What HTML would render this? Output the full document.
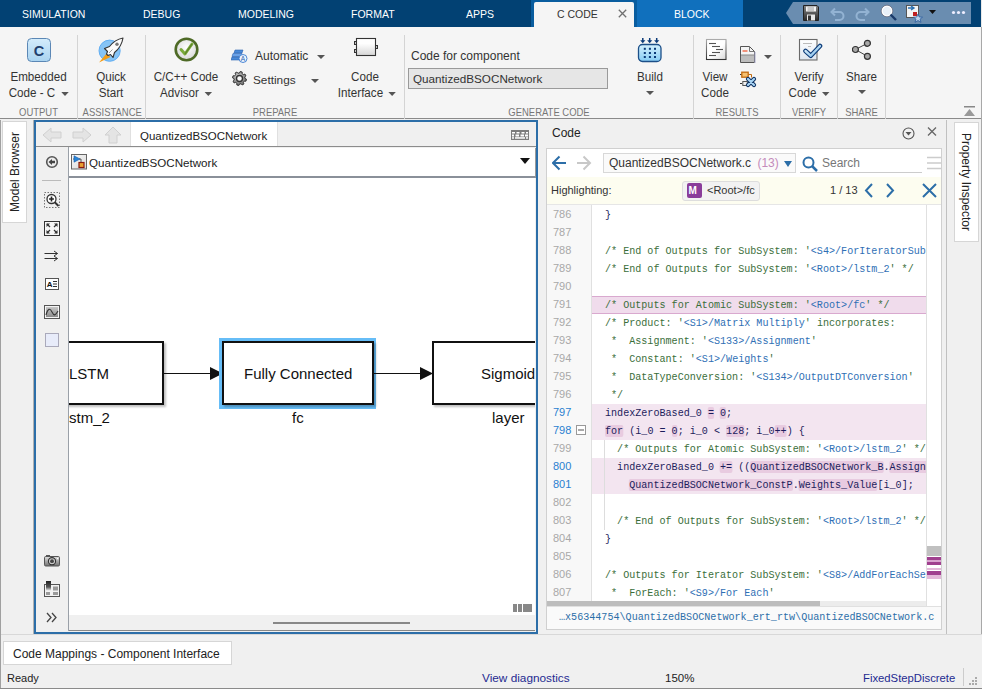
<!DOCTYPE html>
<html><head><meta charset="utf-8">
<style>
*{margin:0;padding:0;box-sizing:border-box}
html,body{width:982px;height:689px;overflow:hidden;background:#f0f0f0;font-family:"Liberation Sans",sans-serif;color:#222}
.a{position:absolute}
.t{position:absolute;white-space:nowrap;line-height:1}
#top{left:0;top:0;width:982px;height:27px;background:#024173}
.tab{position:absolute;top:9px;font-size:10.5px;color:#fff;white-space:nowrap;line-height:1}
#ribbon{left:0;top:27px;width:982px;height:92px;background:#f5f5f5;border-bottom:1px solid #8a8a8a}
.rl{position:absolute;font-size:12.5px;transform:scaleX(0.93);color:#333;white-space:nowrap;line-height:16px;text-align:center}
.sec{position:absolute;top:80px;font-size:11px;color:#777;transform:scaleX(0.86);white-space:nowrap;line-height:1}
.sep{position:absolute;top:8px;width:1px;height:84px;background:#d4d4d4}
.arr{display:inline-block;width:0;height:0;border-left:4px solid transparent;border-right:4px solid transparent;border-top:4px solid #555;vertical-align:middle;margin-left:6px}
.code{position:absolute;font-family:"Liberation Mono",monospace;font-size:11px;line-height:10px;transform:scaleX(0.917);transform-origin:0 0;color:#1c1c5c;white-space:pre}
.cm{color:#3a6e3a}.st{color:#2f6fb5}.hl{background:#e8cbe0;border-radius:2px}
.ln{position:absolute;left:6px;font-size:11px;line-height:10px;margin-top:-1px}
</style></head><body>
<div id="top" class="a">
 <div class="tab" style="left:22px">SIMULATION</div>
 <div class="tab" style="left:143px">DEBUG</div>
 <div class="tab" style="left:238px">MODELING</div>
 <div class="tab" style="left:351px">FORMAT</div>
 <div class="tab" style="left:466px">APPS</div>
 <div class="a" style="left:531px;top:0;width:106px;height:27px;background:#095d9f"></div>
 <div class="a" style="left:534px;top:2px;width:100px;height:25px;background:#f5f5f5;border-radius:2px 2px 0 0"></div>
 <div class="tab" style="left:557px;color:#333">C CODE</div>
 <svg class="a" style="left:618px;top:9px" width="9" height="9"><path d="M0.8,0.8 L8.2,8.2 M8.2,0.8 L0.8,8.2" stroke="#707070" stroke-width="1.3"/></svg>
 <div class="a" style="left:637px;top:0;width:106px;height:27px;background:#1070bd"></div>
 <div class="tab" style="left:674px">BLOCK</div>
 <svg class="a" style="left:786px;top:2px" width="185" height="22"><polygon points="7,0 185,0 185,22 7,22 0,11" fill="#6a8db0"/>
 <g transform="translate(17,3)"><defs><linearGradient id="gSv" x1="0" y1="0" x2="0" y2="1"><stop offset="0" stop-color="#888"/><stop offset="1" stop-color="#2a2a2a"/></linearGradient></defs><path d="M0.5,0.5 H14 L15.5,2 V15.5 H0.5Z" fill="url(#gSv)" stroke="#222"/><rect x="3" y="1.5" width="10" height="5" fill="#f4f4f4"/><line x1="4.5" y1="3" x2="11" y2="3" stroke="#999"/><line x1="4.5" y1="5" x2="11" y2="5" stroke="#999"/><rect x="4" y="9.5" width="8" height="6" fill="#e8e8e8"/><rect x="5" y="10.5" width="3" height="5" fill="#333"/></g>
 <g transform="translate(44,4)" fill="none" stroke="#93b3d3" stroke-width="2"><path d="M3,6 H9.5 A4,4 0 0 1 9.5,14 H5"/><path d="M5,2.5 L1.5,6 L5,9.5"/></g>
 <g transform="translate(69,4)" fill="none" stroke="#93b3d3" stroke-width="2"><path d="M12,6 H5.5 A4,4 0 0 0 5.5,14 H10"/><path d="M10,2.5 L13.5,6 L10,9.5"/></g>
 <g transform="translate(95,3)"><circle cx="6" cy="6" r="5" fill="#e8f0f8" stroke="#fff" stroke-width="1.6"/><circle cx="6" cy="6" r="5.8" fill="none" stroke="#556" stroke-width="0.6"/><path d="M9.5,9.5 L15,15" stroke="#1a3a6a" stroke-width="2.4"/></g>
 <g transform="translate(120,3)"><rect x="0.5" y="0.5" width="12" height="12" fill="#f4f4f4" stroke="#555"/><path d="M2,3 H7 M5,1 L8,3 L5,5" stroke="#2a6fb0" stroke-width="1.4" fill="none"/><rect x="7" y="7" width="4" height="4" fill="#c02020"/><path d="M12,9 L13.3,12 L16.5,12.2 L14,14.2 L15,17.3 L12,15.5 L9,17.3 L10,14.2 L7.5,12.2 L10.7,12Z" fill="#b8d0ea" stroke="#2a5a9a" stroke-width="0.8"/></g>
 <path d="M143,8 L150,8 L146.5,12Z" fill="#111"/>
 <g fill="#eef"><circle cx="167.5" cy="10.5" r="1.6"/><circle cx="172.5" cy="10.5" r="1.6"/><circle cx="177.5" cy="10.5" r="1.6"/></g>
</svg>
</div>

<div id="ribbon" class="a">
 <div class="sep" style="left:77px"></div>
 <div class="sep" style="left:145px"></div>
 <div class="sep" style="left:404px"></div>
 <div class="sep" style="left:693px"></div>
 <div class="sep" style="left:780px"></div>
 <div class="sep" style="left:837px"></div>
 <div class="sep" style="left:885px"></div>
 <!-- Embedded Coder icon -->
 <svg class="a" style="left:27px;top:11px" width="24" height="24"><defs><linearGradient id="gC" x1="0" y1="0" x2="0" y2="1"><stop offset="0" stop-color="#d4ecfb"/><stop offset="1" stop-color="#a9d3f0"/></linearGradient></defs><rect x="0.5" y="0.5" width="23" height="23" rx="4" fill="url(#gC)" stroke="#5b87b5"/><text x="12" y="17.5" text-anchor="middle" font-family="Liberation Sans" font-weight="bold" font-size="14.5" fill="#1f3f6e">C</text></svg>
 <div class="rl" style="left:0;width:77px;top:42px">Embedded</div>
 <div class="rl" style="left:0;width:77px;top:58px">Code - C<span class="arr"></span></div>
 <div class="sec" style="left:0;width:77px;text-align:center">OUTPUT</div>
 <!-- Quick start rocket -->
 <svg class="a" style="left:96px;top:9px" width="28" height="28"><circle cx="13.6" cy="14.7" r="10.6" fill="#86c4f6" stroke="#62aef2" stroke-width="1"/><path d="M3,26.5 L10.5,17.5 L14.5,21Z" fill="#f49d16"/><path d="M27,2 C22,3 17,6 13.5,10.5 L8.5,12.5 L11.5,15.5 L10.5,18 L12,19.5 L14.5,18.5 L17,21.5 L18.5,16.5 C23,13 26,8 27,2Z" fill="#fbfbfb" stroke="#333" stroke-width="1.1" stroke-linejoin="round"/><circle cx="21" cy="8.2" r="1.7" fill="#777"/><path d="M13,17 L16.5,13.5" stroke="#999" stroke-width="1"/></svg>
 <div class="rl" style="left:78px;width:66px;top:42px">Quick</div>
 <div class="rl" style="left:78px;width:66px;top:58px">Start</div>
 <div class="sec" style="left:78px;width:66px;text-align:center">ASSISTANCE</div>
 <!-- Advisor -->
 <svg class="a" style="left:174px;top:10px" width="25" height="25"><defs><radialGradient id="gA" cx="0.5" cy="0.4" r="0.6"><stop offset="0" stop-color="#ffffff"/><stop offset="1" stop-color="#d8d8d8"/></radialGradient></defs><circle cx="12.5" cy="12.5" r="10.8" fill="url(#gA)" stroke="#4e6a26" stroke-width="2.6"/><path d="M7,12.5 L11,17 L18,7" fill="none" stroke="#7aaa3a" stroke-width="3" stroke-linecap="round" stroke-linejoin="round"/><path d="M11,17 L18,7" fill="none" stroke="#5b7f2a" stroke-width="1.2"/></svg>
 <div class="rl" style="left:146px;width:80px;top:42px">C/C++ Code</div>
 <div class="rl" style="left:146px;width:80px;top:58px">Advisor<span class="arr"></span></div>
 <svg class="a" style="left:231px;top:22px" width="17" height="14"><path d="M4,1 H12 L11,4 H3Z" fill="#4a8ad8" stroke="#2a62b0" stroke-width="0.6"/><path d="M2,4.5 H11 L10,7.5 H1Z" fill="#6aa2e8" stroke="#2a62b0" stroke-width="0.6"/><path d="M1,8 H10 L9,11 H0Z" fill="#4a8ad8" stroke="#2a62b0" stroke-width="0.6"/><circle cx="12" cy="9.5" r="4" fill="#eef5fd" stroke="#3a7ad0" stroke-width="0.9"/><text x="12" y="12" text-anchor="middle" font-size="6.5" font-family="Liberation Sans" fill="#2a62b0">A</text></svg>
 <div class="rl" style="left:255px;top:21px;text-align:left;font-size:12px;transform:none">Automatic</div>
 <div class="a" style="left:317px;top:28px;border-left:4px solid transparent;border-right:4px solid transparent;border-top:4px solid #555"></div>
 <svg class="a" style="left:232px;top:72px;top:44px" width="15" height="15"><defs><radialGradient id="gG" cx="0.4" cy="0.35" r="0.7"><stop offset="0" stop-color="#d0d0d0"/><stop offset="1" stop-color="#6a6a6a"/></radialGradient></defs><path d="M13.00,7.50 L14.47,8.16 L13.97,10.18 L12.36,10.07 L11.39,11.39 L11.96,12.89 L10.18,13.97 L9.12,12.76 L7.50,13.00 L6.84,14.47 L4.82,13.97 L4.93,12.36 L3.61,11.39 L2.11,11.96 L1.03,10.18 L2.24,9.12 L2.00,7.50 L0.53,6.84 L1.03,4.82 L2.64,4.93 L3.61,3.61 L3.04,2.11 L4.82,1.03 L5.88,2.24 L7.50,2.00 L8.16,0.53 L10.18,1.03 L10.07,2.64 L11.39,3.61 L12.89,3.04 L13.97,4.82 L12.76,5.88Z" fill="url(#gG)" stroke="#333" stroke-width="1"/><circle cx="7.5" cy="7.5" r="3" fill="#fafafa" stroke="#333" stroke-width="1.4"/></svg>
 <div class="rl" style="left:253px;top:45px;text-align:left;font-size:11.8px;transform:none">Settings</div>
 <div class="a" style="left:311px;top:52px;border-left:4px solid transparent;border-right:4px solid transparent;border-top:4px solid #555"></div>
 <svg class="a" style="left:353px;top:10px" width="26" height="21"><defs><linearGradient id="gI" x1="0" y1="0" x2="0" y2="1"><stop offset="0.3" stop-color="#fefefe"/><stop offset="1" stop-color="#d6d6d6"/></linearGradient></defs><rect x="1.5" y="4.5" width="3" height="3" fill="#ccc" stroke="#333" stroke-width="1"/><rect x="1.5" y="12.5" width="3" height="3" fill="#ccc" stroke="#333" stroke-width="1"/><rect x="22.5" y="8.5" width="2" height="3" fill="#ccc" stroke="#333" stroke-width="1"/><rect x="3.5" y="1.5" width="19" height="17" fill="url(#gI)" stroke="#333" stroke-width="1.1"/></svg>
 <div class="rl" style="left:330px;width:70px;top:42px">Code</div>
 <div class="rl" style="left:332px;width:70px;top:58px">Interface<span class="arr"></span></div>
 <div class="sec" style="left:146px;width:258px;text-align:center">PREPARE</div>
 <!-- Generate code -->
 <div class="rl" style="left:411px;top:21px;text-align:left;font-size:12px;transform:none">Code for component</div>
 <div class="a" style="left:408px;top:41px;width:200px;height:21px;background:#e6e6e6;border:1px solid #9a9a9a"></div>
 <div class="rl" style="left:413px;top:44px;text-align:left;font-size:11.7px;color:#333;transform:none">QuantizedBSOCNetwork</div>
 <svg class="a" style="left:637px;top:10px" width="26" height="26"><defs><linearGradient id="gB" x1="0" y1="0" x2="0" y2="1"><stop offset="0" stop-color="#d4f0fd"/><stop offset="1" stop-color="#86ccf4"/></linearGradient></defs><rect x="1.5" y="7.5" width="22.5" height="17" rx="4" fill="url(#gB)" stroke="#1c4f88" stroke-width="1.3"/><g fill="#0b3a78"><rect x="6.8" y="10.8" width="2" height="2"/><rect x="6.8" y="15" width="2" height="2"/><rect x="6.8" y="19" width="2" height="2"/><rect x="11.9" y="10.8" width="2" height="2"/><rect x="11.9" y="15" width="2" height="2"/><rect x="11.9" y="19" width="2" height="2"/><rect x="17" y="10.8" width="2" height="2"/><rect x="17" y="15" width="2" height="2"/><rect x="17" y="19" width="2" height="2"/></g><g fill="#0b3a78" stroke="#0b3a78" stroke-width="1.5"><line x1="5.8" y1="1" x2="5.8" y2="4"/><path d="M3.1999999999999997,3.2 L8.4,3.2 L5.8,6.2Z" stroke="none"/><line x1="12.7" y1="1" x2="12.7" y2="4"/><path d="M10.1,3.2 L15.299999999999999,3.2 L12.7,6.2Z" stroke="none"/><line x1="19.7" y1="1" x2="19.7" y2="4"/><path d="M17.099999999999998,3.2 L22.3,3.2 L19.7,6.2Z" stroke="none"/></g></svg>
 <div class="rl" style="left:620px;width:60px;top:42px">Build</div>
 <div class="a" style="left:646px;top:64px;border-left:4px solid transparent;border-right:4px solid transparent;border-top:4px solid #555"></div>
 <div class="sec" style="left:405px;width:288px;text-align:center">GENERATE CODE</div>
 <!-- Results -->
 <svg class="a" style="left:705px;top:11px" width="22" height="23"><defs><linearGradient id="gVb" x1="0" y1="0" x2="0" y2="1"><stop offset="0" stop-color="#aaa"/><stop offset="1" stop-color="#333"/></linearGradient><linearGradient id="gVf" x1="0" y1="0" x2="1" y2="1"><stop offset="0.55" stop-color="#fff"/><stop offset="1" stop-color="#d8d8d8"/></linearGradient></defs><rect x="1.5" y="1.5" width="19.5" height="20" fill="url(#gVf)" stroke="url(#gVb)" stroke-width="1.1"/><g stroke="#555" stroke-width="1.1"><line x1="4" y1="5.5" x2="11" y2="5.5"/><line x1="7" y1="8.5" x2="15" y2="8.5"/><line x1="11" y1="11.5" x2="18" y2="11.5"/><line x1="7" y1="14.5" x2="15" y2="14.5"/><line x1="4" y1="17.5" x2="11" y2="17.5"/></g></svg>
 <svg class="a" style="left:740px;top:19px" width="16" height="17"><path d="M0.5,0.5 H9.5 L14.5,5.5 V16.5 H0.5Z" fill="#f4f4f4" stroke="#555"/><path d="M9.5,0.5 V5.5 H14.5" fill="none" stroke="#777"/><rect x="1" y="9" width="13" height="7" fill="#bdbdbd"/><line x1="1" y1="9" x2="14" y2="9" stroke="#888"/><line x1="2.5" y1="5" x2="7.5" y2="5" stroke="#f07050" stroke-width="1.5"/><line x1="15" y1="6" x2="15" y2="17" stroke="#aac" stroke-width="1"/></svg>
 <div class="a" style="left:764px;top:28px;border-left:4px solid transparent;border-right:4px solid transparent;border-top:4px solid #555"></div>
 <svg class="a" style="left:739px;top:43px" width="19" height="18"><line x1="1" y1="4.5" x2="3" y2="4.5" stroke="#333"/><line x1="1" y1="13.5" x2="3" y2="13.5" stroke="#333"/><rect x="2.8" y="2.2" width="6.4" height="5" fill="#f5c070" stroke="#c06a10" stroke-width="1.3"/><path d="M9.2,4.5 H12.5 V7.5" fill="none" stroke="#c06a10" stroke-width="1"/><rect x="3.8" y="11.5" width="4.5" height="4" fill="#f0f0f0" stroke="#555" stroke-width="1"/><path d="M9,9 L15,15 M15,9 L9,15" stroke="#0b2f60" stroke-width="4.2" stroke-linecap="round"/><path d="M9,9 L15,15 M15,9 L9,15" stroke="#a8d4f4" stroke-width="2.2" stroke-linecap="round"/></svg>
 <div class="rl" style="left:695px;width:40px;top:42px">View</div>
 <div class="rl" style="left:695px;width:40px;top:58px">Code</div>
 <div class="sec" style="left:694px;width:86px;text-align:center">RESULTS</div>
 <!-- Verify -->
 <svg class="a" style="left:798px;top:11px" width="25" height="24"><defs><linearGradient id="gVd" x1="0" y1="0" x2="0" y2="1"><stop offset="0" stop-color="#fff"/><stop offset="1" stop-color="#dde6f0"/></linearGradient><linearGradient id="gVk" x1="0" y1="0" x2="1" y2="1"><stop offset="0" stop-color="#e6f6fd"/><stop offset="1" stop-color="#7ab8e8"/></linearGradient></defs><rect x="1.5" y="1.5" width="17.5" height="20.5" fill="url(#gVd)" stroke="#6a6a6a" stroke-width="1.1"/><g stroke="#bbb" stroke-width="1"><line x1="5" y1="5.5" x2="14" y2="5.5"/><line x1="10" y1="8.5" x2="13" y2="8.5"/></g><path d="M7.5,13 L12.8,17.8 L22,8" fill="none" stroke="#0b3a78" stroke-width="4.6" stroke-linejoin="round" stroke-linecap="round"/><path d="M7.5,13 L12.8,17.8 L22,8" fill="none" stroke="url(#gVk)" stroke-width="2.4" stroke-linejoin="round" stroke-linecap="round"/></svg>
 <div class="rl" style="left:781px;width:56px;top:42px">Verify</div>
 <div class="rl" style="left:784px;width:50px;top:58px">Code<span class="arr"></span></div>
 <div class="sec" style="left:781px;width:56px;text-align:center">VERIFY</div>
 <!-- Share -->
 <svg class="a" style="left:852px;top:12px" width="20" height="22"><g stroke="#444" stroke-width="1"><line x1="3.4" y1="10.5" x2="15.4" y2="4.3"/><line x1="3.4" y1="10.5" x2="15.4" y2="17.3"/></g><g fill="#a8a8a8" stroke="#333" stroke-width="1.2"><circle cx="3.4" cy="10.5" r="3"/><circle cx="15.4" cy="4.3" r="3"/><circle cx="15.4" cy="17.3" r="3"/></g></svg>
 <div class="rl" style="left:838px;width:47px;top:42px">Share</div>
 <div class="a" style="left:858px;top:63px;border-left:4px solid transparent;border-right:4px solid transparent;border-top:4px solid #555"></div>
 <div class="sec" style="left:838px;width:47px;text-align:center">SHARE</div>
 <svg class="a" style="left:964px;top:79px" width="11" height="10"><rect x="0" y="0" width="11" height="1.5" fill="#888"/><path d="M0,10 L5.5,3 L11,10Z" fill="#999"/></svg>
</div>


<!-- left model browser strip -->
<div class="a" style="left:0;top:120px;width:34px;height:514px;background:#f0f0f0;border-right:1px solid #b0b0b0"></div>
<div class="a" style="left:0;top:120px;width:1px;height:569px;background:#a0a0a0"></div>
<div class="a" style="left:2px;top:121px;width:25px;height:102px;background:#fff;border:1px solid #d6d6d6"></div>
<div class="t" style="left:15px;top:172px;font-size:12px;color:#222;transform:translate(-50%,-50%) rotate(-90deg)">Model Browser</div>
<!-- canvas pane -->
<div class="a" style="left:34px;top:120px;width:504px;height:514px;border:2px solid #2c6ea8;background:#f0f0f0"></div>
<div class="a" style="left:36px;top:122px;width:500px;height:25px;background:#f0f0f0;border-bottom:1px solid #8c8c8c"></div>
<svg class="a" style="left:42px;top:126px" width="90" height="18">
 <g fill="#e4e4e4" stroke="#d0d0d0" stroke-width="1">
  <path d="M1,9 L9,2 L9,6 L19,6 L19,12 L9,12 L9,16Z"/>
  <path d="M49,9 L41,2 L41,6 L31,6 L31,12 L41,12 L41,16Z"/>
  <path d="M71,1 L79,9 L75,9 L75,17 L67,17 L67,9 L63,9Z"/>
 </g>
</svg>
<div class="a" style="left:130px;top:122px;width:148px;height:24px;background:#fff;border-left:1px solid #e0e0e0;border-right:1px solid #e0e0e0"></div>
<div class="t" style="left:140px;top:130.5px;font-size:11.5px;color:#222">QuantizedBSOCNetwork</div>
<svg class="a" style="left:511px;top:130px" width="18" height="10"><rect x="0" y="0" width="18" height="10" fill="#7c7c7c"/><g fill="#fff"><rect x="1" y="2" width="3" height="1.5"/><rect x="5.5" y="2" width="3" height="1.5"/><rect x="10.5" y="2" width="3" height="1.5"/><rect x="15" y="2" width="2" height="1.5"/><rect x="1" y="4.5" width="2" height="2"/><rect x="4.5" y="4.5" width="3.5" height="2"/><rect x="9.5" y="4.5" width="3.5" height="2"/><rect x="14" y="4.5" width="3" height="2"/><rect x="1" y="7.2" width="2" height="1.5"/><rect x="4" y="7.2" width="10" height="1.5"/><rect x="15" y="7.2" width="2" height="1.5"/></g></svg>
<!-- vertical toolbar -->
<div class="a" style="left:36px;top:147px;width:33px;height:484px;background:#f0f0f0;border-right:1px solid #9aa0a8"></div>
<svg class="a" style="left:36px;top:147px" width="33" height="484">
 <g transform="translate(16,15)"><circle r="5.3" fill="#eee" stroke="#555" stroke-width="1.6"/><path d="M-3.5,0 L0,-3 L0,-1.2 L3,-1.2 L3,1.2 L0,1.2 L0,3Z" fill="#444"/></g>
 <line x1="6" y1="33.5" x2="25" y2="33.5" stroke="#bbb"/>
 <g transform="translate(8,45)"><rect x="0.5" y="0.5" width="15" height="15" fill="none" stroke="#777" stroke-dasharray="1.5 1.5"/><circle cx="7.5" cy="7" r="4.5" fill="#fff" stroke="#333" stroke-width="1.3"/><path d="M5.1,7 H9.9 M7.5,4.6 V9.4" stroke="#222" stroke-width="1.6"/><path d="M10.5,10 L14.5,14" stroke="#333" stroke-width="2"/></g>
 <g transform="translate(8,74)"><rect x="0.5" y="0.5" width="15" height="14" fill="#f6f6f6" stroke="#333"/><path d="M3,3 L6,6 M13,3 L10,6 M3,12 L6,9 M13,12 L10,9" stroke="#333" stroke-width="1.3" fill="none"/><path d="M2.5,2.5 H6 L2.5,6Z M13.5,2.5 H10 L13.5,6Z M2.5,12.5 H6 L2.5,9Z M13.5,12.5 H10 L13.5,9Z" fill="#333"/></g>
 <g transform="translate(8.5,104)" stroke="#333" stroke-width="1" fill="none"><path d="M0,2.5 H13 M9.5,0 L13,2.5 L9.5,5 M0,7.5 H13 M9.5,5 L13,7.5 L9.5,10"/></g>
 <g transform="translate(9,131)"><rect x="0.5" y="0.5" width="13" height="11" fill="#fff" stroke="#555"/><text x="1.8" y="9.3" font-size="8" font-weight="bold" font-family="Liberation Sans" fill="#111">A</text><path d="M8,3.5 H12 M8,6 H12 M8,8.5 H12" stroke="#333" stroke-width="1"/></g>
 <g transform="translate(8,158)"><defs><linearGradient id="gW" x1="0" y1="0" x2="0" y2="1"><stop offset="0" stop-color="#c8c8c8"/><stop offset="1" stop-color="#8a8a8a"/></linearGradient></defs><rect x="0.5" y="0.5" width="15" height="13" fill="#f4f4f4" stroke="#555"/><rect x="2" y="2" width="12" height="10" fill="url(#gW)"/><path d="M2,10 C4,3 6,3 8,7 S11,11 14,6" stroke="#333" stroke-width="1.1" fill="none"/></g>
 <g transform="translate(9,186)"><rect x="0.5" y="0.5" width="13" height="13" fill="#e8ecfa" stroke="#aab"/></g>
 <g transform="translate(8,407)"><defs><linearGradient id="gCam" x1="0" y1="0" x2="0" y2="1"><stop offset="0" stop-color="#e0e0e0"/><stop offset="1" stop-color="#707070"/></linearGradient></defs><rect x="0.5" y="2.5" width="15" height="9.5" rx="1.2" fill="url(#gCam)" stroke="#555"/><rect x="2" y="1" width="4" height="2" fill="#555"/><circle cx="8" cy="7.2" r="3.6" fill="#ccc" stroke="#333" stroke-width="1.1"/><circle cx="8" cy="7.2" r="1.9" fill="#444"/><rect x="13" y="4" width="1.2" height="1.2" fill="#fff"/></g>
 <g transform="translate(8,434)"><defs><linearGradient id="gBar" x1="0" y1="0" x2="0" y2="1"><stop offset="0" stop-color="#222"/><stop offset="0.6" stop-color="#555"/><stop offset="1" stop-color="#fff"/></linearGradient></defs><rect x="0.5" y="3.5" width="15" height="12" fill="#f2f2f2" stroke="#555"/><rect x="9" y="5.5" width="5" height="4" fill="#9a9a9a"/><rect x="2" y="11" width="4" height="3" fill="#9a9a9a"/><rect x="9" y="11" width="5" height="3" fill="#9a9a9a"/><rect x="2" y="0" width="5" height="10" fill="url(#gBar)"/></g>
 <g transform="translate(11,466)" stroke="#444" stroke-width="1.3" fill="none"><path d="M0,0 L4,4.5 L0,9 M5,0 L9,4.5 L5,9"/></g>
</svg>
<!-- address bar -->
<div class="a" style="left:69px;top:148px;width:467px;height:30px;background:#fff;border-bottom:2px solid #8a9099;border-right:1px solid #9a9a9a"></div>
<svg class="a" style="left:71px;top:154px" width="16" height="16"><defs><linearGradient id="gM" x1="0" y1="0" x2="1" y2="1"><stop offset="0" stop-color="#fafafa"/><stop offset="1" stop-color="#d8d8d8"/></linearGradient></defs><rect x="0.5" y="0.5" width="15" height="14.5" fill="url(#gM)" stroke="#666"/><path d="M2,5 H4 M8,5 H10 V8.5" stroke="#333" stroke-width="0.8" fill="none"/><path d="M3,1.8 L9,5 L3,8.2Z" fill="#2a86d8" stroke="#1a5aa8" stroke-width="0.6"/><rect x="8" y="8.5" width="5" height="5" fill="#e8a030" stroke="#8a1a10" stroke-width="1.2"/></svg>
<div class="t" style="left:89px;top:157px;font-size:11.6px;color:#222">QuantizedBSOCNetwork</div>
<div class="a" style="left:520px;top:158px;border-left:5px solid transparent;border-right:5px solid transparent;border-top:6px solid #111"></div>
<!-- canvas white -->
<div class="a" style="left:69px;top:178px;width:466px;height:437px;background:#fff;overflow:hidden">
 <div class="a" style="left:-20px;top:163px;width:115px;height:64px;border:2.5px solid #111;box-shadow:2px 2px 2px rgba(0,0,0,0.25)"></div>
 <div class="t" style="left:0px;top:188px;font-size:15px;color:#111">LSTM</div>
 <div class="t" style="left:0px;top:232px;font-size:15px;color:#111">stm_2</div>
 <div class="a" style="left:95px;top:195px;width:47px;height:1px;background:#111"></div>
 <svg class="a" style="left:141px;top:189px" width="13" height="13"><path d="M0,0 L13,6.5 L0,13Z" fill="#111"/></svg>
 <div class="a" style="left:149.5px;top:159.5px;width:157px;height:71px;background:#66bdf7"></div>
 <div class="a" style="left:153px;top:163px;width:152px;height:64px;border:2.5px solid #111;background:#fff;box-shadow:2px 2px 2px rgba(0,0,0,0.25)"></div>
 <div class="t" style="left:175px;top:188px;font-size:15px;color:#111">Fully Connected</div>
 <div class="t" style="left:223px;top:232px;font-size:15px;color:#111">fc</div>
 <div class="a" style="left:305px;top:195px;width:48px;height:1px;background:#111"></div>
 <svg class="a" style="left:351px;top:189px" width="13" height="13"><path d="M0,0 L13,6.5 L0,13Z" fill="#111"/></svg>
 <div class="a" style="left:363px;top:163px;width:153px;height:64px;border:2.5px solid #111;background:#fff;box-shadow:2px 2px 2px rgba(0,0,0,0.25)"></div>
 <div class="t" style="left:412px;top:188px;font-size:15px;color:#111">Sigmoid</div>
 <div class="t" style="left:423px;top:232px;font-size:15px;color:#111">layer</div>
 <svg class="a" style="left:444px;top:425px" width="20" height="10"><rect x="0" y="1" width="4" height="8" fill="#888"/><rect x="5" y="1" width="4" height="8" fill="#888"/><rect x="10" y="1" width="9" height="8" fill="#888"/></svg>
</div>
<div class="a" style="left:69px;top:615px;width:466px;height:16px;background:#f0f0f0;border-bottom:1px solid #888"></div>
<div class="a" style="left:273px;top:622px;width:137px;height:2px;background:#888"></div>
<!-- code panel region -->
<div class="a" style="left:538px;top:120px;width:409px;height:514px;background:#f0f0f0;border-right:1px solid #c0c0c0"></div>
<div class="t" style="left:552px;top:127px;font-size:12px;color:#222">Code</div>
<svg class="a" style="left:902px;top:127px" width="36" height="13"><circle cx="6.5" cy="6.5" r="5.5" fill="none" stroke="#555" stroke-width="1.1"/><path d="M3.5,5 L9.5,5 L6.5,8.5Z" fill="#555"/><path d="M26,0.5 L34,8.5 M34,0.5 L26,8.5" stroke="#666" stroke-width="1.3"/></svg>
<div class="a" style="left:546px;top:148px;width:396px;height:482px;background:#fff;border:1px solid #d0d0d0"></div>
<svg class="a" style="left:552px;top:155px" width="40" height="16"><path d="M1,8 H14 M7.5,1.5 L1,8 L7.5,14.5" stroke="#2c6ea8" stroke-width="2" fill="none"/><path d="M25,8 H38 M31.5,1.5 L38,8 L31.5,14.5" stroke="#c8c8c8" stroke-width="2" fill="none"/></svg>
<div class="a" style="left:603px;top:153px;width:193px;height:20px;background:#fafafa;border:1px solid #d8d8d8"></div>
<div class="t" style="left:609px;top:157px;font-size:12px;color:#333">QuantizedBSOCNetwork.c <span style="color:#c48bbb;margin-left:3px">(13)</span></div>
<div class="a" style="left:784px;top:161px;border-left:4px solid transparent;border-right:4px solid transparent;border-top:6px solid #2c6ea8"></div>
<svg class="a" style="left:802px;top:156px" width="17" height="16"><circle cx="6.5" cy="6.5" r="5" fill="none" stroke="#2c6ea8" stroke-width="2"/><path d="M10,10 L15,15" stroke="#2c6ea8" stroke-width="2.5"/></svg>
<div class="t" style="left:822px;top:157px;font-size:12px;color:#777">Search</div>
<div class="a" style="left:800px;top:172px;width:122px;height:1px;background:#ccc"></div>
<svg class="a" style="left:927px;top:155px" width="14" height="16"><path d="M0,2.5 H14 M0,8 H14 M0,13.5 H14" stroke="#ccc" stroke-width="1.6"/></svg>
<div class="a" style="left:547px;top:177px;width:379px;height:28px;background:#fdfdf0;border-bottom:1px solid #e6e6e6"></div>
<div class="a" style="left:926px;top:177px;width:15px;height:28px;background:#fdfdf0;border-bottom:1px solid #e6e6e6"></div>
<div class="t" style="left:551px;top:185px;font-size:11px;color:#333">Highlighting:</div>
<div class="a" style="left:682px;top:181px;width:78px;height:20px;background:#f2f2f2;border:1px solid #ddd;border-radius:3px"></div>
<div class="a" style="left:687px;top:183px;width:15px;height:15px;background:#8a3c9a;border-radius:2px"></div>
<div class="t" style="left:688.5px;top:185.5px;font-size:10px;font-weight:bold;color:#fff">M</div>
<div class="t" style="left:707px;top:185px;font-size:11px;color:#333">&lt;Root&gt;/fc</div>
<div class="t" style="left:830px;top:185px;font-size:11px;color:#333">1 / 13</div>
<svg class="a" style="left:862px;top:183px" width="76" height="15"><path d="M10,1 L4,7.5 L10,14 M25,1 L31,7.5 L25,14" stroke="#2c6ea8" stroke-width="2" fill="none"/><path d="M61,1 L74,14 M74,1 L61,14" stroke="#2c6ea8" stroke-width="2" fill="none"/></svg>
<!-- code lines -->
<div id="code" class="a" style="left:547px;top:205px;width:394px;height:396px;overflow:hidden;background:#fff">
<div class="a" style="left:0;top:0;width:45px;height:396px;background:#f8f8f8;border-right:1px solid #e0e0e0"></div>
<div class="t ln" style="top:5px;color:#a8a8a8">786</div>
<div class="t code" style="left:58px;top:5px">}</div>
<div class="t ln" style="top:23px;color:#a8a8a8">787</div>
<div class="t ln" style="top:41px;color:#a8a8a8">788</div>
<div class="t code" style="left:58px;top:41px"><span class="cm">/* End of Outputs for SubSystem: &#x27;</span><span class="st">&lt;S4&gt;/ForIteratorSubsystem</span><span class="cm">&#x27; */</span></div>
<div class="t ln" style="top:59px;color:#a8a8a8">789</div>
<div class="t code" style="left:58px;top:59px"><span class="cm">/* End of Outputs for SubSystem: &#x27;</span><span class="st">&lt;Root&gt;/lstm_2</span><span class="cm">&#x27; */</span></div>
<div class="t ln" style="top:77px;color:#a8a8a8">790</div>
<div class="a" style="left:45px;top:91px;width:334px;height:18px;background:#f0dcec;border-top:1px solid #d9a9cf;border-bottom:1px solid #d9a9cf"></div>
<div class="t ln" style="top:95px;color:#a8a8a8">791</div>
<div class="t code" style="left:58px;top:95px"><span class="cm">/* Outputs for Atomic SubSystem: &#x27;</span><span class="st">&lt;Root&gt;/fc</span><span class="cm">&#x27; */</span></div>
<div class="t ln" style="top:113px;color:#a8a8a8">792</div>
<div class="t code" style="left:58px;top:113px"><span class="cm">/* Product: &#x27;</span><span class="st">&lt;S1&gt;/Matrix Multiply</span><span class="cm">&#x27; incorporates:</span></div>
<div class="t ln" style="top:131px;color:#a8a8a8">793</div>
<div class="t code" style="left:58px;top:131px"><span class="cm"> *  Assignment: &#x27;</span><span class="st">&lt;S133&gt;/Assignment</span><span class="cm">&#x27;</span></div>
<div class="t ln" style="top:149px;color:#a8a8a8">794</div>
<div class="t code" style="left:58px;top:149px"><span class="cm"> *  Constant: &#x27;</span><span class="st">&lt;S1&gt;/Weights</span><span class="cm">&#x27;</span></div>
<div class="t ln" style="top:167px;color:#a8a8a8">795</div>
<div class="t code" style="left:58px;top:167px"><span class="cm"> *  DataTypeConversion: &#x27;</span><span class="st">&lt;S134&gt;/OutputDTConversion</span><span class="cm">&#x27;</span></div>
<div class="t ln" style="top:185px;color:#a8a8a8">796</div>
<div class="t code" style="left:58px;top:185px"><span class="cm"> */</span></div>
<div class="a" style="left:45px;top:199px;width:334px;height:18px;background:#f3e5f0"></div>
<div class="t ln" style="top:203px;color:#2a7fd0">797</div>
<div class="t code" style="left:58px;top:203px">indexZeroBased_0 <span class="hl">=</span> <span class="hl">0</span>;</div>
<div class="a" style="left:45px;top:217px;width:334px;height:18px;background:#f3e5f0"></div>
<div class="t ln" style="top:221px;color:#2a7fd0">798</div>
<div class="t code" style="left:58px;top:221px"><span class="hl">for</span> (i_0 = <span class="hl">0</span>; i_0 &lt; <span class="hl">128</span>; i_0<span class="hl">++</span>) {</div>
<div class="t ln" style="top:239px;color:#a8a8a8">799</div>
<div class="t code" style="left:58px;top:239px"><span class="cm">  /* Outputs for Atomic SubSystem: &#x27;</span><span class="st">&lt;Root&gt;/lstm_2</span><span class="cm">&#x27; */</span></div>
<div class="a" style="left:45px;top:253px;width:334px;height:18px;background:#f3e5f0"></div>
<div class="t ln" style="top:257px;color:#2a7fd0">800</div>
<div class="t code" style="left:58px;top:257px">  indexZeroBased_0 <span class="hl">+=</span> ((<span class="hl">QuantizedBSOCNetwork_B</span>.<span class="hl">Assignment</span>[i_0]</div>
<div class="a" style="left:45px;top:271px;width:334px;height:18px;background:#f3e5f0"></div>
<div class="t ln" style="top:275px;color:#2a7fd0">801</div>
<div class="t code" style="left:58px;top:275px">    <span class="hl">QuantizedBSOCNetwork_ConstP</span>.<span class="hl">Weights_Value</span>[i_0];</div>
<div class="t ln" style="top:293px;color:#a8a8a8">802</div>
<div class="t ln" style="top:311px;color:#a8a8a8">803</div>
<div class="t code" style="left:58px;top:311px"><span class="cm">  /* End of Outputs for SubSystem: &#x27;</span><span class="st">&lt;Root&gt;/lstm_2</span><span class="cm">&#x27; */</span></div>
<div class="t ln" style="top:329px;color:#a8a8a8">804</div>
<div class="t code" style="left:58px;top:329px">}</div>
<div class="t ln" style="top:347px;color:#a8a8a8">805</div>
<div class="t ln" style="top:365px;color:#a8a8a8">806</div>
<div class="t code" style="left:58px;top:365px"><span class="cm">/* Outputs for Iterator SubSystem: &#x27;</span><span class="st">&lt;S8&gt;/AddForEachSelector</span><span class="cm">&#x27; */</span></div>
<div class="t ln" style="top:383px;color:#a8a8a8">807</div>
<div class="t code" style="left:58px;top:383px"><span class="cm"> *  ForEach: &#x27;</span><span class="st">&lt;S9&gt;/For Each</span><span class="cm">&#x27;</span></div>
<svg class="a" style="left:29px;top:220px" width="10" height="10"><rect x="0.5" y="0.5" width="9" height="9" fill="#fff" stroke="#999"/><path d="M2,5 H8" stroke="#555"/></svg>
<div class="a" style="left:57px;top:235px;width:1px;height:90px;background:#ddd"></div>
<div class="a" style="left:379px;top:0;width:15px;height:396px;background:#fff;border-left:1px solid #e0e0e0"></div>
<div class="a" style="left:380px;top:341px;width:14px;height:10px;background:#c0c0c0"></div>
<div class="a" style="left:380px;top:352px;width:14px;height:3px;background:#a0408f"></div>
<div class="a" style="left:380px;top:355px;width:14px;height:2px;background:#d9a3cf"></div>
<div class="a" style="left:380px;top:357px;width:14px;height:3px;background:#a0408f"></div>
<div class="a" style="left:380px;top:360px;width:14px;height:3px;background:#fff"></div>
<div class="a" style="left:380px;top:363px;width:14px;height:2px;background:#e3b8d9"></div>
<div class="a" style="left:380px;top:366px;width:14px;height:4px;background:#a0408f"></div>
<div class="a" style="left:380px;top:370px;width:14px;height:4px;background:#e3b8d9"></div>
</div>
<div class="a" style="left:547px;top:601px;width:379px;height:5px;background:#ececec"></div><div class="a" style="left:926px;top:600px;width:15px;height:6px;background:#fff;border-left:1px solid #e0e0e0"></div>
<div class="a" style="left:547px;top:601px;width:273px;height:5px;background:#bdbdbd"></div>
<div class="a" style="left:547px;top:606px;width:394px;height:23px;background:#fafafa;border-top:1px solid #e0e0e0"></div>
<div class="t code" style="left:559px;top:612px;color:#2c6ea8">…x56344754\QuantizedBSOCNetwork_ert_rtw\QuantizedBSOCNetwork.c</div>
<!-- property inspector -->
<div class="a" style="left:954px;top:122px;width:25px;height:120px;background:#fff;border:1px solid #d6d6d6"></div>
<div class="t" style="left:966px;top:182px;font-size:12px;color:#222;transform:translate(-50%,-50%) rotate(90deg)">Property Inspector</div>
<!-- bottom -->
<div class="a" style="left:0;top:634px;width:982px;height:55px;background:#f0f0f0;border-top:1px solid #d8d8d8"></div>
<div class="a" style="left:0;top:634px;width:1px;height:55px;background:#a0a0a0"></div>
<div class="a" style="left:3px;top:641px;width:229px;height:24px;background:#fff;border:1px solid #d6d6d6"></div>
<div class="t" style="left:13px;top:648px;font-size:12px;color:#222">Code Mappings - Component Interface</div>
<div class="t" style="left:7px;top:673px;font-size:11px;color:#222">Ready</div>
<div class="t" style="left:482px;top:672.5px;font-size:11.8px;color:#1e2a90">View diagnostics</div>
<div class="t" style="left:665px;top:672.5px;font-size:11.5px;color:#222">150%</div>
<div class="t" style="left:863px;top:672.5px;font-size:11.3px;color:#1e2a90">FixedStepDiscrete</div>
<div class="a" style="left:963px;top:668px;width:1px;height:18px;background:#ccc"></div>
<svg class="a" style="left:967px;top:676px" width="12" height="11"><g fill="#aaa"><rect x="8" y="1" width="2" height="2"/><rect x="5" y="4" width="2" height="2"/><rect x="8" y="4" width="2" height="2"/><rect x="2" y="7" width="2" height="2"/><rect x="5" y="7" width="2" height="2"/><rect x="8" y="7" width="2" height="2"/></g></svg>
<div class="a" style="left:0;top:688px;width:982px;height:1px;background:#8a8a8a"></div>
<div class="a" style="left:981px;top:0;width:1px;height:27px;background:#e8e8e8"></div>
<div class="a" style="left:981px;top:27px;width:1px;height:607px;background:#a8a8a8"></div>

</body></html>
